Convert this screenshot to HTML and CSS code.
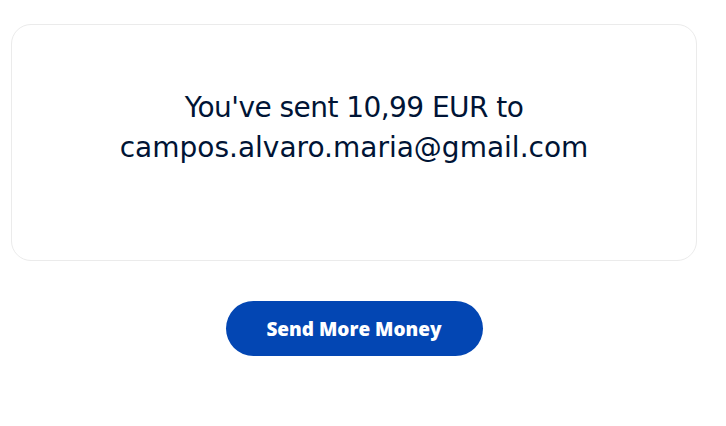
FILE: index.html
```
<!DOCTYPE html>
<html lang="en">
<head>
<meta charset="utf-8">
<link rel="stylesheet" href="styles.css">
</head>
<body>
<main class="page">
  <section class="card">
    <p class="message"><span class="amount-line">You've sent 10,99 EUR to</span><br>campos.alvaro.maria@gmail.com</p>
  </section>
  <div class="actions">
    <button class="btn-primary" type="button">Send More Money</button>
  </div>
</main>
</body>
</html>
```
FILE: styles.css
```
* { box-sizing: border-box; }
html, body { margin: 0; padding: 0; background: #fff; }
body { font-family: "DejaVu Sans", Inter, sans-serif; color: #001435; }
.page {
  padding: 24px 29px 0 11px;
  display: flex;
  flex-direction: column;
  align-items: center;
}
.card {
  width: 100%;
  height: 237px;
  padding-bottom: 29px;
  border: 1px solid #ebebeb;
  border-radius: 20px;
  display: flex;
  align-items: center;
  justify-content: center;
}
.message {
  margin: 0;
  text-align: center;
  font-size: 28px;
  line-height: 40px;
  font-weight: 400;
}
.amount-line {
  letter-spacing: -0.55px;
}
.actions {
  margin-top: 40px;
}
.btn-primary {
  width: 257px;
  height: 55px;
  border: none;
  border-radius: 28px;
  background: #0346b3;
  color: #fff;
  font-family: "Open Sans", Inter, sans-serif;
  font-size: 19px;
  font-weight: 800;
  cursor: pointer;
}
```
